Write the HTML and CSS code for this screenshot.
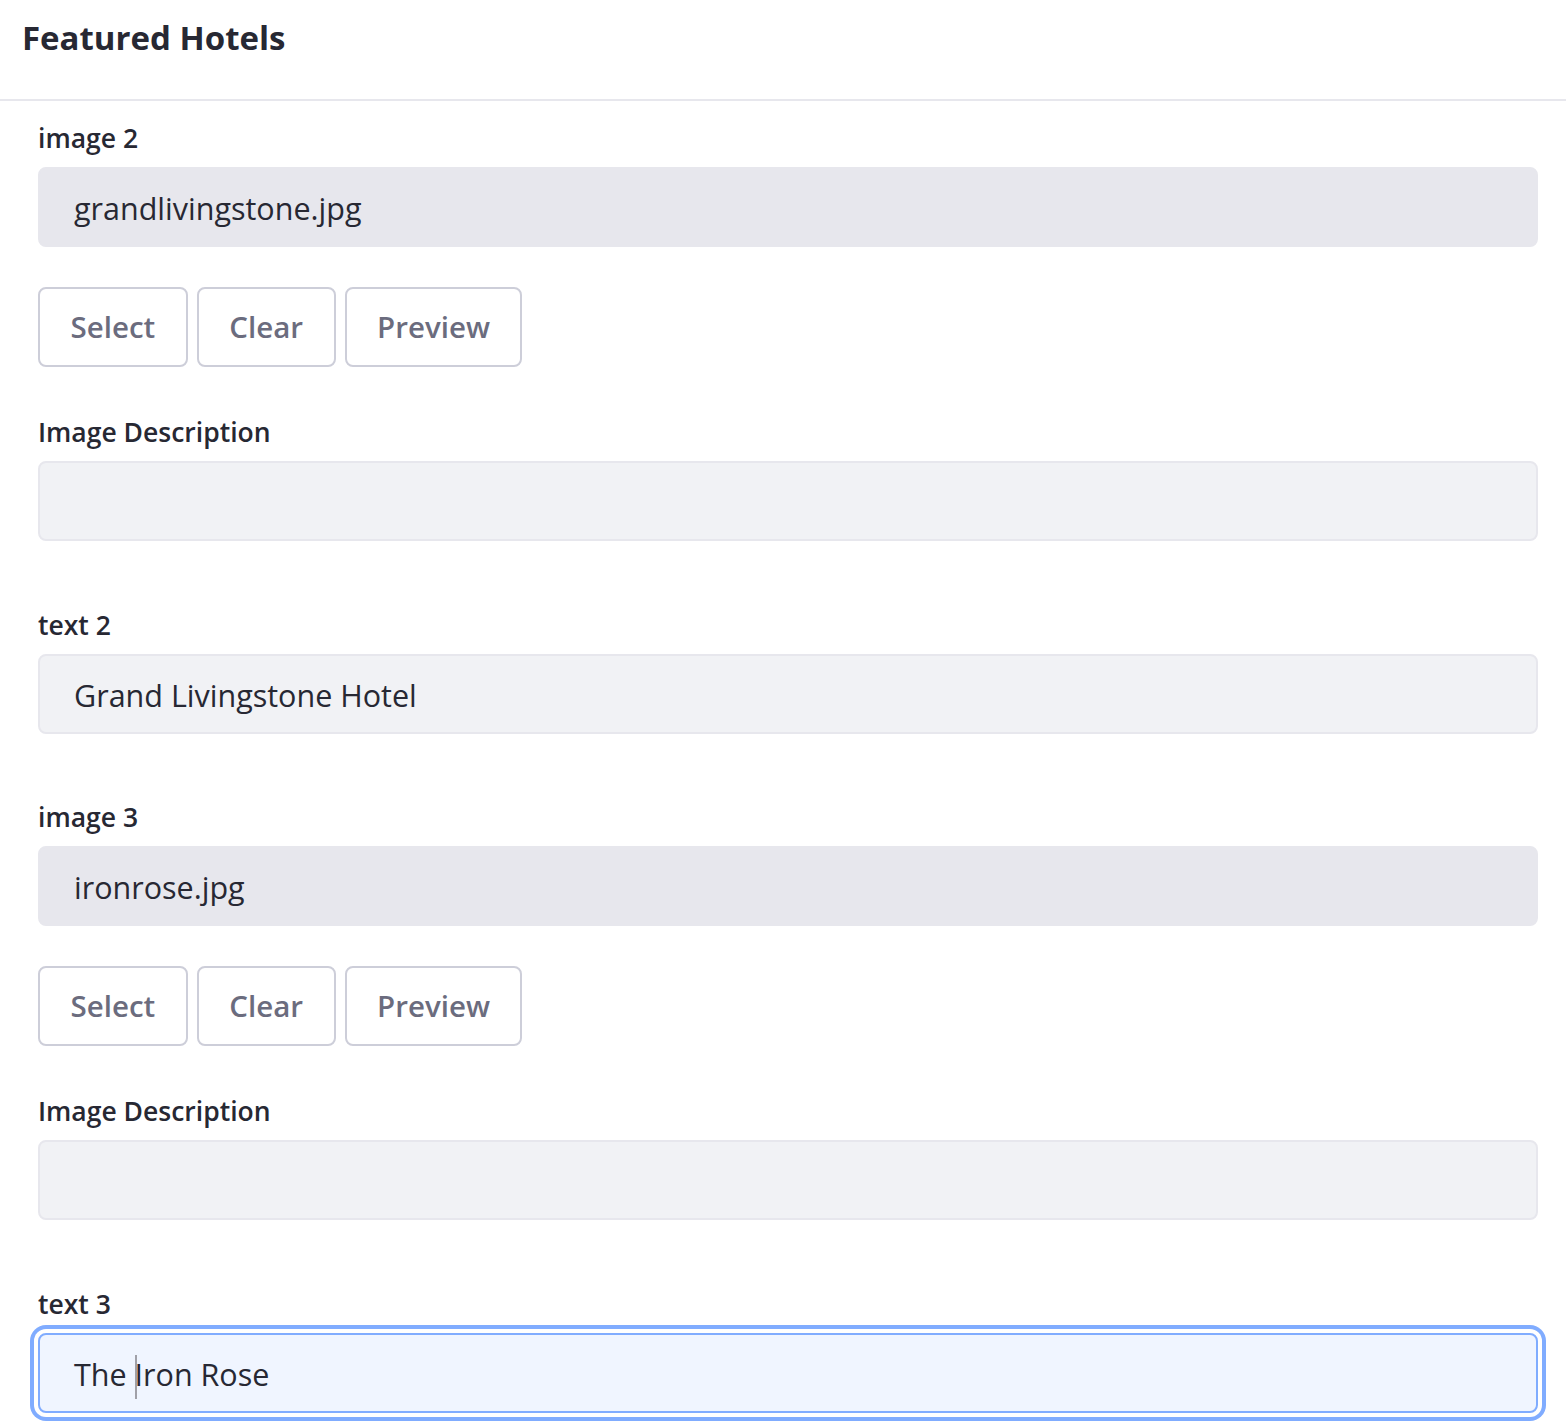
FILE: index.html
```html
<!DOCTYPE html>
<html lang="en">
<head>
<meta charset="utf-8">
<title>Featured Hotels</title>
<link rel="stylesheet" href="styles.css">
</head>
<body>
<header class="sheet-header">
  <h1 class="sheet-title">Featured Hotels</h1>
</header>
<main class="sheet-body">
  <div class="field field-image">
    <label class="field-label">image 2</label>
    <div class="form-control readonly">grandlivingstone.jpg</div>
    <div class="btn-group">
      <button class="btn">Select</button>
      <button class="btn">Clear</button>
      <button class="btn">Preview</button>
    </div>
  </div>
  <div class="field">
    <label class="field-label">Image Description</label>
    <div class="form-control"></div>
  </div>
  <div class="field">
    <label class="field-label">text 2</label>
    <div class="form-control">Grand Livingstone Hotel</div>
  </div>
  <div class="field field-image">
    <label class="field-label">image 3</label>
    <div class="form-control readonly">ironrose.jpg</div>
    <div class="btn-group">
      <button class="btn">Select</button>
      <button class="btn">Clear</button>
      <button class="btn">Preview</button>
    </div>
  </div>
  <div class="field">
    <label class="field-label">Image Description</label>
    <div class="form-control"></div>
  </div>
  <div class="field">
    <label class="field-label">text 3</label>
    <div class="form-control focused">The <span class="caret"></span>Iron Rose</div>
  </div>
</main>
</body>
</html>
```

FILE: styles.css
```css
* { box-sizing: border-box; }
html, body {
  margin: 0;
  padding: 0;
  background: #ffffff;
  font-family: "Open Sans", "Noto Sans", sans-serif;
  color: #272833;
}
.sheet-header {
  height: 101px;
  border-bottom: 2px solid #e7e7ed;
  padding: 14px 22px 0;
}
.sheet-title {
  margin: 0;
  font-size: 33px;
  font-weight: 700;
  line-height: 48px;
  color: #272833;
}
.sheet-body {
  padding: 16px 28px 0 38px;
  display: flex;
  flex-direction: column;
}
.field {
  display: flex;
  flex-direction: column;
  margin-bottom: 62.5px;
}
.field-image {
  margin-bottom: 44px;
}
.field-label {
  font-size: 26.5px;
  font-weight: 600;
  line-height: 42px;
  margin-bottom: 8px;
  color: #272833;
}
.form-control {
  height: 80px;
  border: 2px solid #e7e7ed;
  border-radius: 8px;
  background: #f1f2f5;
  padding: 0 34px;
  font-size: 30.5px;
  line-height: 78px;
  color: #272833;
  white-space: nowrap;
}
.form-control.readonly {
  background: #e7e7ed;
}
.form-control.focused {
  background: #f0f5ff;
  border-color: #80acff;
  box-shadow: 0 0 0 4px #ffffff, 0 0 0 8px #80acff;
}
.caret {
  display: inline-block;
  width: 2px;
  height: 44px;
  background: #a0a0a8;
  vertical-align: middle;
  margin-right: -2px;
}
.btn-group {
  display: flex;
  gap: 9px;
  margin-top: 40px;
}
.btn {
  height: 80px;
  padding: 0 30.5px;
  border: 2px solid #cdced9;
  border-radius: 8px;
  background: #ffffff;
  color: #6b6c7e;
  font-family: inherit;
  font-size: 29.5px;
  font-weight: 600;
  line-height: 1;
}
```
